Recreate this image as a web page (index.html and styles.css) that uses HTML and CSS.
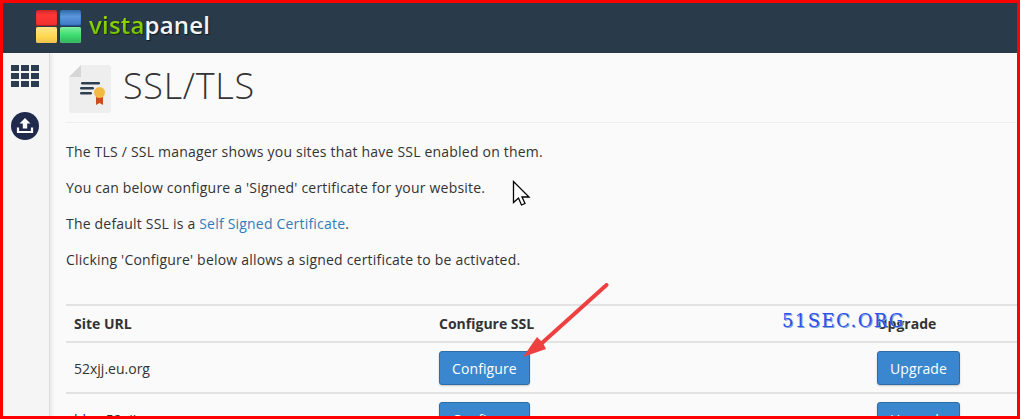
FILE: index.html
```html
<!DOCTYPE html>
<html lang="en">
<head>
<meta charset="utf-8">
<title>SSL/TLS</title>
<link rel="stylesheet" href="styles.css">
</head>
<body>
<div class="frame">
  <header class="topbar">
    <div class="logo-grid">
      <span class="sq sq-red"></span><span class="sq sq-blue"></span>
      <span class="sq sq-yellow"></span><span class="sq sq-green"></span>
    </div>
    <div class="brand"><span class="brand-a">vista</span><span class="brand-b">panel</span></div>
  </header>
  <div class="body-row">
    <aside class="side">
      <div class="grid-icon">
        <i></i><i></i><i></i><i></i><i></i><i></i><i></i><i></i><i></i>
      </div>
      <svg class="upload" width="28" height="28" viewBox="0 0 28 28">
        <circle cx="14" cy="14" r="14" fill="#1f2a4d"/>
        <path d="M14 6l5.500 5.500h-3.300v5h-4.400v-5H8.500z" fill="#fff"/>
        <path d="M7 15.500v4.500h14v-4.500" fill="none" stroke="#fff" stroke-width="2.200"/>
      </svg>
    </aside>
    <main class="main">
      <div class="title-row">
        <svg class="doc" width="42" height="48" viewBox="0 0 42 48">
          <path d="M12 0h27a3 3 0 0 1 3 3v42a3 3 0 0 1-3 3H3a3 3 0 0 1-3-3V12z" fill="#eeeeee"/>
          <path d="M12 0v12H0z" fill="#d6d6d6"/>
          <rect x="12" y="17" width="19" height="2.500" rx="1.200" fill="#2e3f50"/>
          <rect x="11" y="22" width="14" height="2.500" rx="1.200" fill="#2e3f50"/>
          <rect x="11" y="27" width="12" height="2.500" rx="1.200" fill="#2e3f50"/>
          <path d="M27 30h7v10l-3.500-2-3.500 2z" fill="#c9501c"/>
          <circle cx="30.500" cy="27.500" r="5.500" fill="#f4b942"/>
        </svg>
        <h1 class="title">SSL/TLS</h1>
      </div>
      <p class="para">The TLS / SSL manager shows you sites that have SSL enabled on them.</p>
      <p class="para">You can below configure a 'Signed' certificate for your website.</p>
      <p class="para">The default SSL is a <a class="link" href="#">Self Signed Certificate</a>.</p>
      <p class="para">Clicking 'Configure' below allows a signed certificate to be activated.</p>
      <table class="sites">
        <thead>
          <tr><th class="c1">Site URL</th><th class="c2">Configure SSL</th><th class="c3">Upgrade</th></tr>
        </thead>
        <tbody>
          <tr><td>52xjj.eu.org</td><td><button class="btn">Configure</button></td><td><button class="btn">Upgrade</button></td></tr>
          <tr><td>blog.52xjj.eu.org</td><td><button class="btn">Configure</button></td><td><button class="btn">Upgrade</button></td></tr>
        </tbody>
      </table>
    </main>
  </div>
  <svg class="cursor" width="20" height="28" viewBox="0 0 20 28">
    <path d="M1.500 1.500v21l5-4.500 3 7 3.500-1.500-3-6.500h7z" fill="#fff" stroke="#000" stroke-width="1.300"/>
  </svg>
  <svg class="arrow" width="90" height="80" viewBox="0 0 90 80">
    <path d="M87.500 2L23 60" fill="none" stroke="#ee4040" stroke-width="4" stroke-linecap="round"/>
    <path d="M4 74L18 54L24 60L27 66z" fill="#ee4040"/>
  </svg>
  <div class="mark">51SEC.ORG</div>
</div>
</body>
</html>
```

FILE: styles.css
```css
* { box-sizing: border-box; }
html, body { margin: 0; padding: 0; }
body { font-family: "Open Sans", "Liberation Sans", sans-serif; font-size: 14px; color: #333; background: #fafafa; }
.frame { position: relative; width: 1020px; height: 419px; overflow: hidden; border: 3px solid #ff0000; background: #fafafa; }
.topbar { height: 50px; background: #293a4a; display: flex; align-items: flex-start; padding: 7px 0 0 33px; }
.logo-grid { display: grid; grid-template-columns: 21px 21px; grid-template-rows: 16px 16px; column-gap: 3px; row-gap: 1px; }
.sq { border-radius: 2px; }
.sq-red { background: linear-gradient(#c9262a, #ff3636 30%, #f03030); box-shadow: inset 0 -1px 1px #b02024; }
.sq-blue { background: linear-gradient(#2f68a8, #5b96de 40%, #3e78c4); box-shadow: inset 0 -1px 1px #1f4f90; }
.sq-yellow { background: linear-gradient(#ffe58a, #ffd84f 60%, #efc14a); box-shadow: inset 0 0 1px #fff0b0; }
.sq-green { background: linear-gradient(#7cf0a0, #3fdc70 50%, #2fb45c); box-shadow: inset 0 0 1px #b0ffc8; }
.brand { margin-left: 8px; font-size: 24px; font-weight: 600; line-height: 30px; letter-spacing: 0.200px; }
.brand-a { color: #8ed400; background: linear-gradient(#a8ee00, #68b400); -webkit-background-clip: text; background-clip: text; -webkit-text-fill-color: transparent; filter: drop-shadow(1px 1px 0 #1a2a10); }
.brand-b { color: #f2f4f6; text-shadow: 1px 1px 1px #10181f; }
.body-row { display: flex; height: 366px; }
.side { width: 47px; flex: none; background: #f5f5f5; border-right: 1px solid #dcdcdc; box-shadow: 2px 0 4px rgba(0, 0, 0, 0.08); display: flex; flex-direction: column; align-items: center; padding: 12px 0 0 0; }
.grid-icon { display: grid; grid-template-columns: repeat(3, 8px); grid-auto-rows: 6px; gap: 2px; margin-left: -3px; }
.grid-icon i { background: #2b3c4e; display: block; }
.upload { margin: 25px 0 0 -3px; }
.main { flex: 1; min-width: 0; padding: 12px 0 0 16px; }
.title-row { display: flex; align-items: flex-start; gap: 12px; height: 58px; border-bottom: 1px solid #eeeeee; padding-left: 3px; }
.doc { flex: none; }
.title { margin: -3px 0 0 0; font-size: 36px; font-weight: 300; line-height: 48px; color: #333; letter-spacing: 0.700px; }
.para { margin: 0; height: 36px; line-height: 20px; letter-spacing: 0.200px; }
.title-row + .para { margin-top: 19px; }
.link { color: #337ab7; text-decoration: none; }
.sites { border-collapse: collapse; width: 951px; table-layout: fixed; margin-top: 18px; }
.sites th, .sites td { text-align: left; padding: 8px; border-top: 2px solid #e2e2e2; vertical-align: middle; }
.sites th { font-weight: 700; height: 37px; }
.sites td { height: 50px; padding-bottom: 7px; }
.c1 { width: 365px; }
.c2 { width: 438px; }
.btn { font: inherit; letter-spacing: 0.100px; color: #fff; background: #3a87cf; border: 1px solid #2e6da4; border-radius: 3px; height: 34px; padding: 0 12px; box-shadow: 0 1px 2px rgba(0, 0, 0, 0.2); display: block; }
.cursor { position: absolute; left: 509px; top: 177px; }
.arrow { position: absolute; left: 516px; top: 280px; }
.mark { position: absolute; left: 779px; top: 309px; font-family: "DejaVu Serif", serif; font-size: 18px; letter-spacing: 1.400px; color: #2f50ee; text-shadow: 1px 1px 0 #7fa6d6; line-height: 18px; }
```
